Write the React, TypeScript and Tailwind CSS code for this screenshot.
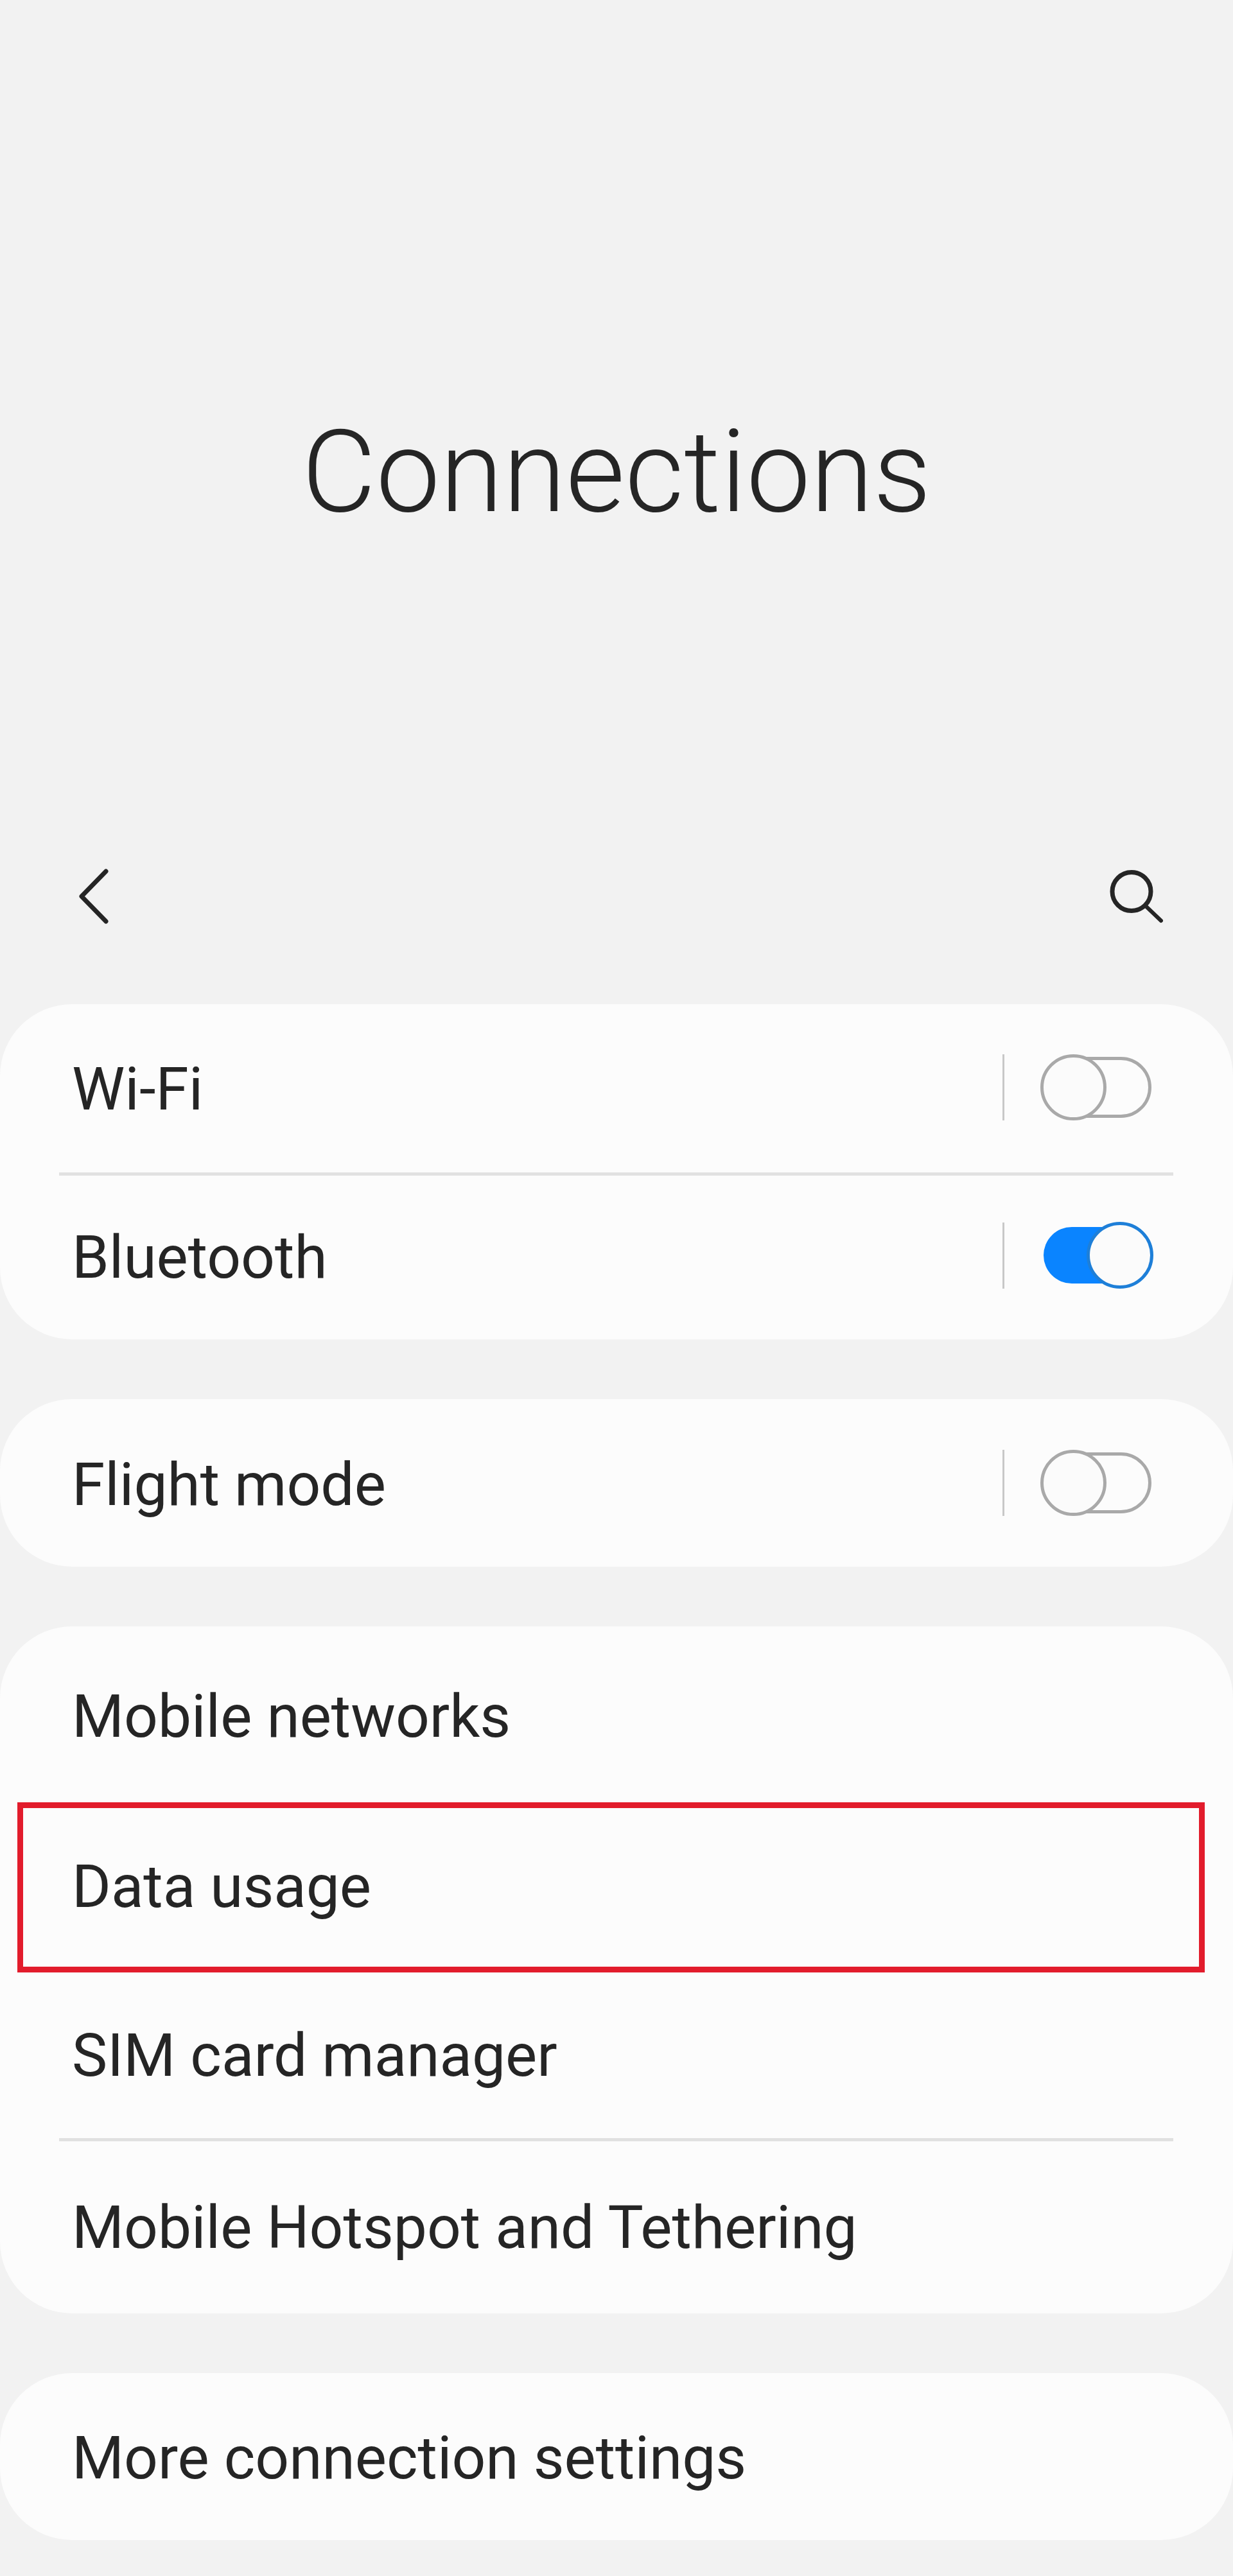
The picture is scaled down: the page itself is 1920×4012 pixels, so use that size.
const rowText = "text-[92.8px] leading-none text-[#252525] whitespace-nowrap";

function Toggle({ on }: { on?: boolean }) {
  if (on) {
    return (
      <div className="relative w-[173px] h-[104px] flex items-center">
        <div className="ml-[5px] w-[165px] h-[88px] rounded-full bg-[#0a84ff]" />
        <div className="absolute left-[72px] top-0 w-[104px] h-[104px] rounded-full bg-[#fbfbfb] border-[5px] border-[#1e7fd8]" />
      </div>
    );
  }
  return (
    <div className="relative w-[173px] h-[103px] flex items-center">
      <div className="ml-[4px] w-[169px] h-[95px] rounded-full border-[5px] border-[#a9a9a9]" />
      <div className="absolute left-0 top-0 w-[103px] h-[103px] rounded-full bg-[#fbfbfb] border-[5px] border-[#a9a9a9]" />
    </div>
  );
}

function ToggleRow({ label, on, height }: { label: string; on?: boolean; height: string }) {
  return (
    <div className={`${height} flex items-center pl-[112px] pr-[127px]`}>
      <span className={`${rowText} flex-1 pt-[8px]`}>{label}</span>
      <div className="w-[3px] h-[103px] bg-[#c8c8c8] mr-[56px]" />
      <Toggle on={on} />
    </div>
  );
}

function LinkRow({ label, height }: { label: string; height: string }) {
  return (
    <div className={`${height} flex items-center pl-[112px]`}>
      <span className={rowText}>{label}</span>
    </div>
  );
}

function Divider() {
  return <div className="ml-[92px] mr-[93px] h-[5px] bg-[#e1e1e1]" />;
}

export default function App() {
  return (
    <div
      className="w-[1920px] h-[4012px] bg-[#f2f2f2] overflow-hidden"
      style={{ fontFamily: 'Roboto, "Liberation Sans", sans-serif' }}
    >
      <div className="h-[1300px] flex items-start justify-center pt-[620px]">
        <h1 className="text-[178px] leading-[230px] font-light text-[#252525]">Connections</h1>
      </div>

      <div className="h-[264px] flex items-start justify-between pl-[120px] pr-[107px] pt-[50px]">
        <svg width="52" height="92" viewBox="0 0 52 92" fill="none" stroke="#252525" strokeWidth="7" strokeLinecap="round" strokeLinejoin="round">
          <path d="M45 7 L7 46 L45 85" />
        </svg>
        <svg width="88" height="88" viewBox="0 0 88 88" fill="none" stroke="#252525" strokeWidth="7" strokeLinecap="round">
          <circle cx="37" cy="38.5" r="30" />
          <path d="M60 62 L83 84" strokeWidth="6" />
        </svg>
      </div>

      <div className="flex flex-col gap-[93px]">
        <div className="bg-[#fcfcfc] rounded-[112px] pb-[7px]">
          <ToggleRow label="Wi-Fi" height="h-[259px] mb-[3px]" />
          <Divider />
          <ToggleRow label="Bluetooth" on height="h-[248px]" />
        </div>
        <div className="bg-[#fcfcfc] rounded-[112px]">
          <ToggleRow label="Flight mode" height="h-[261px]" />
        </div>
        <div className="bg-[#fcfcfc] rounded-[112px]">
          <LinkRow label="Mobile networks" height="h-[274px] pt-[8px]" />
          <div className="ml-[27px] mr-[44px] h-[265px] border-[9px] border-[#e21c2c] flex items-center pl-[76px]">
            <span className={rowText}>Data usage</span>
          </div>
          <LinkRow label="SIM card manager" height="h-[258px] pt-[2px]" />
          <Divider />
          <LinkRow label="Mobile Hotspot and Tethering" height="h-[268px] pt-[2px]" />
        </div>
        <div className="bg-[#fcfcfc] rounded-[112px]">
          <LinkRow label="More connection settings" height="h-[260px] pt-[6px]" />
        </div>
      </div>
    </div>
  );
}
